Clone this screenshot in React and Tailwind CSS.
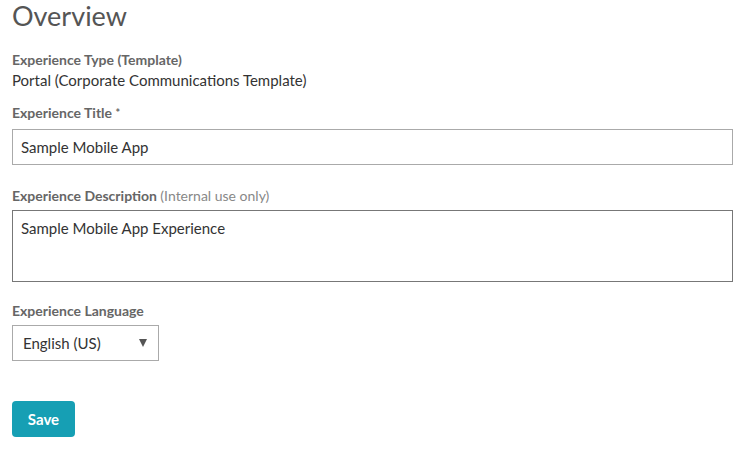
export default function App() {
  return (
    <div className="min-h-screen bg-white pl-3 pr-2 font-['Lato','Noto_Sans',sans-serif] text-[#333]">
      <h1 className="text-[27px] leading-[32px] font-normal text-[#555]">Overview</h1>

      <div className="mt-[18px] leading-[20px]">
        <div className="text-[14px] font-bold text-[#666]">Experience Type (Template)</div>
        <div className="text-[15px] text-[#333]">Portal (Corporate Communications Template)</div>
      </div>

      <label className="mt-[13px] block text-[14px] leading-[20px] font-bold text-[#666]">
        Experience Title <span className="align-top text-[11px]">*</span>
      </label>
      <input
        className="mt-[6px] block h-[36px] w-full border border-[#aaa] px-[8px] text-[15px] text-[#333] outline-none"
        defaultValue="Sample Mobile App"
      />

      <label className="mt-[21px] block text-[14px] leading-[20px] font-bold text-[#666]">
        Experience Description <span className="text-[14px] font-normal text-[#888]">(Internal use only)</span>
      </label>
      <textarea
        className="mt-[4px] block h-[72px] w-full resize-none border border-[#777] px-[8px] py-[7px] text-[15px] leading-[20px] text-[#333] outline-none"
        defaultValue="Sample Mobile App Experience"
      />

      <label className="mt-[19px] block text-[14px] leading-[20px] font-bold text-[#666]">Experience Language</label>
      <div className="relative mt-[4px] flex h-[36px] w-[147px] items-center border border-[#aaa] px-[10px] text-[15px] text-[#333]">
        <span>English (US)</span>
        <svg className="absolute right-[11px] top-[13px]" width="8" height="8" viewBox="0 0 8 8">
          <path d="M0 0 H8 L4 8 Z" fill="#555" />
        </svg>
      </div>

      <button className="mt-[40px] h-[36px] w-[63px] rounded-[4px] bg-[#169fb4] text-[15px] font-bold text-white">
        Save
      </button>
    </div>
  );
}
